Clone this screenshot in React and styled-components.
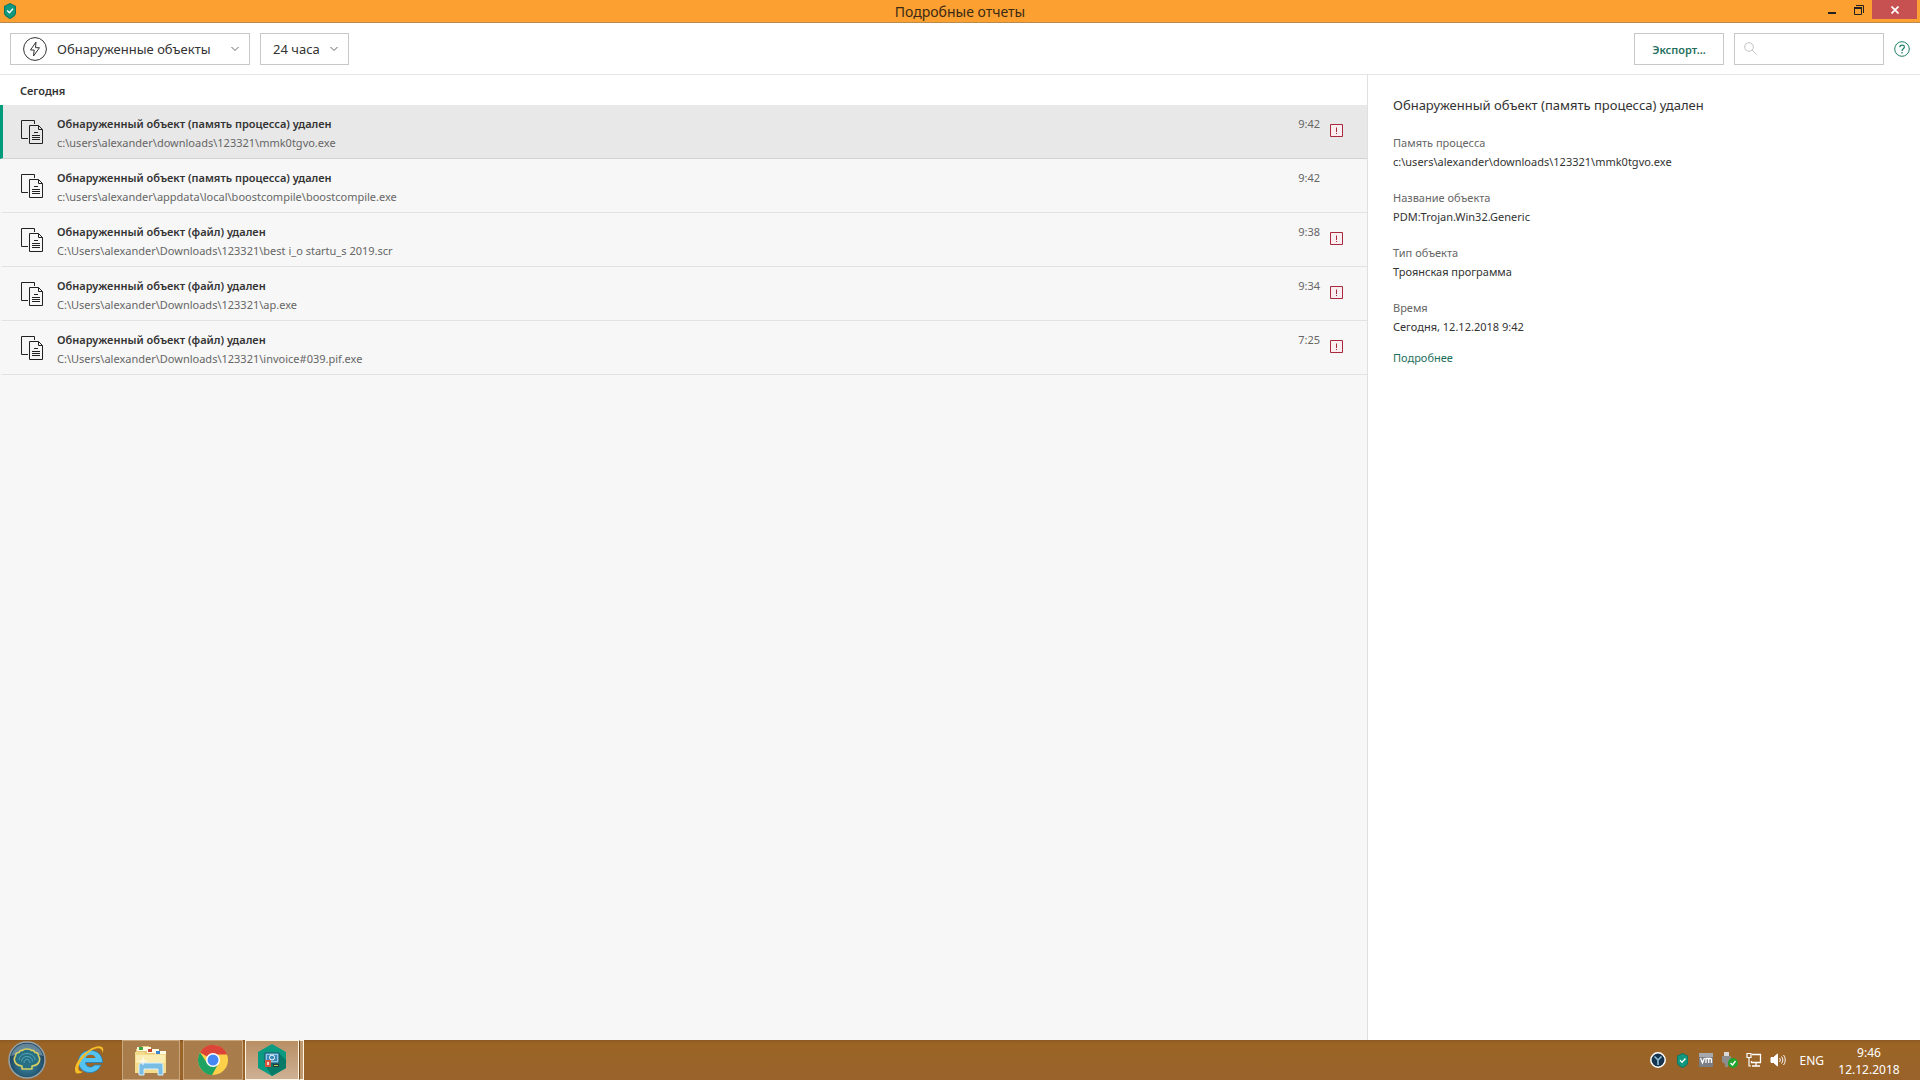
import React, { useState } from 'react'
import styled, { createGlobalStyle } from 'styled-components'

const GlobalStyle = createGlobalStyle`
  * {
    box-sizing: border-box;
  }
  body {
    margin: 0;
    background: #f7f7f7;
    color: #333;
    font-family: "Noto Sans", "Open Sans", sans-serif;
    font-size: 11px;
    line-height: 19px;
  }
  button, input, select {
    font: inherit;
    color: inherit;
    margin: 0;
  }
`

const Screen = styled.div`
  display: flex;
  flex-direction: column;
  min-height: 100vh;
`

/* title bar */
const TitleBar = styled.header`
  display: grid;
  grid-template-columns: 1fr auto 1fr;
  height: 23px;
  padding: 0 3px;
  background: #fca032;
  border-bottom: 1px solid #b98a4e;
`
const Logo = styled.div`
  padding: 3px 0 0 1px;
  svg { display: block; }
`
const WindowTitle = styled.h1`
  margin: 0;
  font-size: 14px;
  font-weight: 400;
  line-height: 23px;
  color: #3b2a14;
`
const WindowButtons = styled.div`
  display: flex;
  justify-content: flex-end;
`
const WindowButton = styled.button`
  display: flex;
  align-items: center;
  justify-content: center;
  width: ${p => p.$close ? "45px" : "27px"};
  height: 19px;
  padding: 0;
  border: none;
  background: ${p => p.$close ? "#c75050" : "transparent"};
`

/* toolbar */
const Toolbar = styled.div`
  display: flex;
  align-items: center;
  gap: 10px;
  height: 52px;
  padding: 0 10px;
  background: white;
  border-bottom: 1px solid #e6e6e6;
`
const Picker = styled.label`
  display: flex;
  align-items: center;
  width: ${p => p.$width};
  height: 32px;
  padding: 0 9px 0 12px;
  border: 1px solid #c8c8c8;
  background: white;
`
const PickerSelect = styled.select`
  flex: 1;
  min-width: 0;
  height: 30px;
  padding: 1px 0 0;
  border: none;
  outline: none;
  appearance: none;
  background: transparent;
  font-size: 13px;
  margin-left: ${p => p.$indent ? "10px" : "0"};
`
const Spacer = styled.div`
  flex: 1;
`
const ExportButton = styled.button`
  width: 90px;
  height: 32px;
  padding: 1px 0 0;
  border: 1px solid #c8c8c8;
  background: white;
  color: #1f6f5c;
  font-weight: 600;
`
const SearchBox = styled.label`
  display: flex;
  align-items: center;
  gap: 6px;
  width: 150px;
  height: 32px;
  padding: 0 9px;
  border: 1px solid #c8c8c8;
  background: white;
`
const SearchInput = styled.input`
  flex: 1;
  min-width: 0;
  padding: 0;
  border: none;
  outline: none;
  background: transparent;
`
const HelpButton = styled.button`
  display: flex;
  padding: 0;
  border: none;
  background: none;
`

/* report */
const Main = styled.main`
  flex: 1;
  display: grid;
  grid-template-columns: minmax(0, 1fr) 553px;
`
const ListPane = styled.section`
  background: #f7f7f7;
`
const DayHeader = styled.h2`
  margin: 0;
  padding: 6px 20px 5px;
  font-size: 11px;
  font-weight: 600;
  line-height: 19px;
  background: white;
`
const Events = styled.ul`
  margin: 0;
  padding: 0;
  list-style: none;
`
const EventRow = styled.button`
  display: flex;
  align-items: center;
  width: 100%;
  height: 54px;
  padding: 0 24px 0 18px;
  border: none;
  border-left: 3px solid ${p => p.$active ? "#009b7b" : "transparent"};
  border-bottom: 1px solid ${p => p.$active ? "#d2d2d2" : "#e2e2e2"};
  background: ${p => p.$active ? "#e8e8e8" : "#f7f7f7"};
  background-clip: padding-box;
  text-align: left;
`
const EventText = styled.span`
  flex: 1;
  display: flex;
  flex-direction: column;
  margin-left: 14px;
  padding-top: 3px;
`
const EventTitle = styled.strong`
  font-weight: 600;
`
const EventPath = styled.span`
  color: #666;
`
const EventTime = styled.time`
  align-self: flex-start;
  padding-top: 9px;
  color: #666;
`
const AlertSlot = styled.span`
  display: flex;
  width: 13px;
  margin-left: 10px;
  padding-bottom: 2px;
`
const Details = styled.aside`
  padding: 20px 25px;
  border-left: 1px solid #e0e0e0;
  background: white;
`
const DetailsTitle = styled.h2`
  margin: 0 0 18px;
  font-size: 13px;
  font-weight: 400;
  line-height: 20px;
`
const Fields = styled.dl`
  display: flex;
  flex-direction: column;
  gap: 17px;
  margin: 0 0 12px;
`
const FieldName = styled.dt`
  color: #666;
`
const FieldValue = styled.dd`
  margin: 0;
`
const MoreLink = styled.a`
  color: #1f6f5c;
  text-decoration: none;
`

/* taskbar */
const Taskbar = styled.footer`
  display: flex;
  align-items: stretch;
  height: 40px;
  background: linear-gradient(#8c5a23, #9c6526 4px, #99622a);
  color: white;
`
const TaskButton = styled.button`
  display: flex;
  align-items: center;
  justify-content: center;
  width: ${p => p.$width};
  padding: 0;
  margin-left: ${p => p.$gap || "0"};
  border: ${p => p.$open ? "1px solid #c9a67c" : "none"};
  background: ${p => p.$open ? "#a97c4b" : "transparent"};
  ${p => p.$focused && "border-color: #fff3e2; background: linear-gradient(#b98f64, #cdb093);"}
`
const StackEdge = styled.span`
  width: 5px;
  border: 1px solid #fff3e2;
  border-left: 1px solid #6f451a;
  background: #c09a70;
`
const Tray = styled.div`
  display: flex;
  align-items: center;
  gap: 8px;
  margin-left: auto;
`
const TrayButton = styled.button`
  display: flex;
  justify-content: center;
  width: 16px;
  padding: 0;
  border: none;
  background: none;
`
const Language = styled.span`
  margin-left: 5px;
  font-size: 12px;
`
const Clock = styled.time`
  width: 74px;
  margin-right: 14px;
  padding-top: 1px;
  font-size: 12px;
  line-height: 17px;
  text-align: center;
`

const Shield = ({ size = 16 }) => (
  <svg width={size * 0.75} height={size} viewBox="0 0 12 16">
    <path d="M6 0 12 3v7c0 2.500-3 4.500-6 6-3-1.500-6-3.500-6-6V3z" fill="#0c7563" />
    <path d="M6 1 11 3.500V10c0 2-2.500 3.600-5 4.900C3.500 13.600 1 12 1 10V3.500z" fill="#12987f" />
    <path d="m3.200 7.600 2.200 2.200 3.600-4" fill="none" stroke="white" strokeWidth="1.400" />
  </svg>
)

const Chevron = () => (
  <svg width="10" height="6" viewBox="0 0 10 6" aria-hidden="true">
    <path d="m1.500 1 3.500 3.500L8.500 1" fill="none" stroke="#666" />
  </svg>
)

const Bolt = () => (
  <svg width="24" height="24" viewBox="0 0 24 24" fill="none" stroke="#333" aria-hidden="true">
    <circle cx="12" cy="12" r="11.400" />
    <path d="M13 5 7.500 13h3.700L10.500 19l6-8.300h-4z" strokeLinejoin="round" />
  </svg>
)

const Documents = () => (
  <svg width="22" height="24" viewBox="0 0 22 24" fill="none" stroke="#222" aria-hidden="true">
    <path d="M13.500 4V.500H.500v18H7M8.500 5.500h9l4 4v14h-13z" />
    <path d="M17.500 5.500v4h4M13 12.500h4M11 15.500h8M11 17.500h8M11 19.500h8" />
  </svg>
)

const Alert = () => (
  <svg width="13" height="13" viewBox="0 0 13 13" role="img" aria-label="Важно">
    <path d="M.500.500h12v12H.500z" fill="#fbeef0" stroke="#a8293c" />
    <path d="M6.500 3.500V8M6.500 9v1" stroke="#a8293c" />
  </svg>
)

const Orb = () => (
  <svg width="38" height="38" viewBox="0 0 38 38">
    <defs>
      <radialGradient id="orb" cx="50%" cy="60%" r="55%">
        <stop offset="0" stopColor="#3f8fa5" />
        <stop offset=".6" stopColor="#28607a" />
        <stop offset="1" stopColor="#1f3f5a" />
      </radialGradient>
    </defs>
    <circle cx="19" cy="19" r="18" fill="url(#orb)" stroke="#93a3aa" strokeWidth="1.500" />
    <path d="M3 15a16.500 16.500 0 0 1 32 0c-8-3-24-3-32 0z" fill="#9db9c6" opacity=".55" />
    <path d="M14 28h10v-3c4-.5 7-2.500 7.500-5.500.5-2 0-3.500-1-4.500 0-2-1.500-3.500-3.500-3.500-.5-1.500-2-2.500-3.500-2C22.500 8 21 8 19 8s-3.500 0-4.500 1.500c-1.500-.5-3 .5-3.500 2C9 11.500 7.500 13 7.500 15c-1 1-1.500 2.500-1 4.500.5 3 3.500 5 7.500 5.500z" fill="#276f83" stroke="#d9cf63" strokeWidth="1.600" strokeLinejoin="round" />
    <path d="M11 19c0-4 4-6.500 8-6.500s8 2.500 8 6.500M13.500 20.500c0-3 2.500-5 5.500-5s5.500 2 5.500 5M16 22c0-2 1-3.500 3-3.500s3 1.500 3 3.500" fill="none" stroke="#5fb3c6" opacity=".8" />
  </svg>
)

const Explorer = () => (
  <svg width="34" height="32" viewBox="0 0 34 32">
    <path d="M2 5h5l1-3h7l1 3h4l1 2h9l2 2v20H2z" fill="#e7c873" />
    <path d="M3 3h14v4H3zM13 5h12v4H13zM21 7h11v4H21z" fill="#fffbe5" />
    <path d="M5 3h4v3H5z" fill="#3da53f" />
    <path d="M14 5h4v3h-4z" fill="#c6452f" />
    <path d="M22 7h4v3h-4z" fill="#3c86cf" />
    <path d="M1 8h9l2 2h20v19H1z" fill="#f4dc8c" />
    <path d="M2 11h29v8H2z" fill="#fbecb2" />
    <path d="M5 31V22c0-2 1-3 3-3h18c2 0 3 1 3 3v9h-5v-6H10v6z" fill="#79bde5" stroke="#d9f1fd" />
    <path d="M9 13v8M5 17h8" stroke="white" />
  </svg>
)

const InternetExplorer = () => (
  <svg width="32" height="32" viewBox="0 0 32 32" fill="none">
    <path d="M29.500 18.500H12.500c.5 5 6 6 9 2.500H28C23 33 5.500 30 5.500 17.500 5.500 3 29.500 2 29.500 18.500z" fill="#55c3f2" stroke="#1b83c4" strokeWidth=".8" />
    <path d="M12.500 14h10c-.5-4.500-9-4.500-10 0z" fill="#9c6526" />
    <path d="M29.500 9C33 1 24 .500 16 6 7 12 0 22 2.500 28c1 2.500 5 1.500 8-.500C2 29 5 19 13 11 20 4 29.500 1 29.500 9z" fill="#f6bd27" />
  </svg>
)

const Chrome = () => (
  <svg width="32" height="32" viewBox="0 0 32 32">
    <circle cx="16" cy="16" r="15" fill="#fdd04a" />
    <path d="M3 8.500a15 15 0 0 1 27.100 2L16 10.500 16 16z" fill="#db4437" />
    <path d="M3 8.500A15 15 0 0 0 15 31l6.500-11.500L10 19z" fill="#1ea362" />
    <circle cx="16" cy="16" r="7" fill="white" />
    <circle cx="16" cy="16" r="5.500" fill="#4587f3" />
  </svg>
)

const KasperskyHex = () => (
  <svg width="30" height="32" viewBox="0 0 30 32">
    <path d="m15 0 14 8v16l-14 8-14-8V8z" fill="#0b9b80" />
    <path d="m22 9 7 7v8l-14 8-6-9z" fill="#087b68" />
    <path d="M8 9h14v10H8z" fill="#8acbe8" stroke="#1d4d6c" />
    <path d="M10 11h10v6H10z" fill="#3a86b6" />
    <circle cx="15" cy="13.500" r="2.500" fill="none" stroke="white" />
    <path d="M8 16h6v7H8z" fill="#d9543f" />
    <path d="M10 18h2v3h-2z" fill="#f4d4c9" />
    <path d="M16 20h6v3h-6z" fill="#283a3e" />
    <path d="M17 21h4v1h-4z" fill="#b5d65a" />
  </svg>
)

const TrayWheel = () => (
  <svg width="16" height="16" viewBox="0 0 16 16">
    <circle cx="8" cy="8" r="7.200" fill="#17334d" stroke="white" strokeWidth="1.500" />
    <path d="M8 13V8L4.500 4.500M8 8l3.500-3.500" stroke="#8fc1da" strokeWidth="1.600" fill="none" />
  </svg>
)

const TrayVm = () => (
  <svg width="14" height="14" viewBox="0 0 14 14">
    <path d="M0 0h14v14H0z" fill="#7b7f85" />
    <path d="M0 0h14v4H0z" fill="#a5a9ad" />
    <path d="m1.500 5 2 5 2-5M7 10V5.500h4.500c1 0 1 .500 1 1V10M9.700 6v4" fill="none" stroke="white" strokeWidth="1.300" />
  </svg>
)

const TrayUsb = () => (
  <svg width="16" height="16" viewBox="0 0 16 16">
    <path d="M2 0h5v4H2z" fill="#d8d8d8" />
    <path d="M0 4h9v6l-3 2v3H3v-3l-3-2z" fill="#8d8d8d" />
    <circle cx="11" cy="11" r="5" fill="#22a52e" />
    <path d="m8.500 11 2 2 3-4" stroke="white" strokeWidth="1.400" fill="none" />
  </svg>
)

const TrayNetwork = () => (
  <svg width="16" height="16" viewBox="0 0 16 16" fill="none" stroke="white">
    <path d="M6 2.500h8.500v8H5.500V9M10 10.500v3M6 14h8" strokeWidth="1.300" />
    <path d="M1 1.500h4v4H1zM3 5.500V14h2" strokeWidth="1.200" />
  </svg>
)

const TraySound = () => (
  <svg width="16" height="16" viewBox="0 0 16 16" fill="none" stroke="white">
    <path d="M1 5.500h2.500L7.500 2v12l-4-3.500H1z" fill="white" />
    <path d="M9.500 6c1 1.200 1 2.800 0 4M11.500 4.500c1.800 2 1.800 5 0 7M13.500 3c2.300 3 2.300 7 0 10" />
  </svg>
)

const events = [
  { title: "Обнаруженный объект (память процесса) удален", path: "c:\\users\\alexander\\downloads\\123321\\mmk0tgvo.exe", time: "9:42", alert: true },
  { title: "Обнаруженный объект (память процесса) удален", path: "c:\\users\\alexander\\appdata\\local\\boostcompile\\boostcompile.exe", time: "9:42", alert: false },
  { title: "Обнаруженный объект (файл) удален", path: "C:\\Users\\alexander\\Downloads\\123321\\best i_o startu_s 2019.scr", time: "9:38", alert: true },
  { title: "Обнаруженный объект (файл) удален", path: "C:\\Users\\alexander\\Downloads\\123321\\ap.exe", time: "9:34", alert: true },
  { title: "Обнаруженный объект (файл) удален", path: "C:\\Users\\alexander\\Downloads\\123321\\invoice#039.pif.exe", time: "7:25", alert: true },
]

const fields = [
  { name: "Память процесса", value: "c:\\users\\alexander\\downloads\\123321\\mmk0tgvo.exe" },
  { name: "Название объекта", value: "PDM:Trojan.Win32.Generic" },
  { name: "Тип объекта", value: "Троянская программа" },
  { name: "Время", value: "Сегодня, 12.12.2018 9:42" },
]

const App = () => {
  const [active, setActive] = useState(0)

  return (
    <Screen>
      <GlobalStyle />
      <TitleBar>
        <Logo><Shield /></Logo>
        <WindowTitle>Подробные отчеты</WindowTitle>
        <WindowButtons>
          <WindowButton aria-label="Свернуть">
            <svg width="8" height="10" viewBox="0 0 8 10"><path d="M0 7h8v2H0z" fill="#222" /></svg>
          </WindowButton>
          <WindowButton aria-label="Восстановить">
            <svg width="10" height="10" viewBox="0 0 10 10" fill="none" stroke="#222">
              <path d="M2 .500h7.500V8M.500 3h7v6.500h-7z" /><path d="M0 3h8" strokeWidth="2" />
            </svg>
          </WindowButton>
          <WindowButton $close aria-label="Закрыть">
            <svg width="8" height="8" viewBox="0 0 8 8"><path d="m.500.500 7 7m0-7-7 7" stroke="white" strokeWidth="1.700" /></svg>
          </WindowButton>
        </WindowButtons>
      </TitleBar>

      <Toolbar>
        <Picker $width="240px">
          <Bolt />
          <PickerSelect $indent aria-label="Отчет">
            <option>Обнаруженные объекты</option>
          </PickerSelect>
          <Chevron />
        </Picker>
        <Picker $width="89px">
          <PickerSelect aria-label="Период">
            <option>24 часа</option>
          </PickerSelect>
          <Chevron />
        </Picker>
        <Spacer />
        <ExportButton>Экспорт...</ExportButton>
        <SearchBox>
          <svg width="13" height="13" viewBox="0 0 13 13" fill="none" stroke="#c4c4c4" aria-hidden="true">
            <circle cx="5" cy="5" r="4.300" /><path d="m8 8 4.500 4.500" />
          </svg>
          <SearchInput type="search" aria-label="Поиск" />
        </SearchBox>
        <HelpButton aria-label="Справка">
          <svg width="16" height="16" viewBox="0 0 16 16" fill="none" stroke="#1f8069">
            <circle cx="8" cy="8" r="7.300" />
            <path d="M5.800 6.300c0-3 4.600-2.800 4.600-.3C10.400 7.800 8 7.800 8 10M8 11v1.500" strokeWidth="1.200" />
          </svg>
        </HelpButton>
      </Toolbar>

      <Main>
        <ListPane>
          <DayHeader>Сегодня</DayHeader>
          <Events>
            {events.map((item, i) => (
              <li key={i}>
                <EventRow $active={i === active} onClick={() => setActive(i)}>
                  <Documents />
                  <EventText>
                    <EventTitle>{item.title}</EventTitle>
                    <EventPath>{item.path}</EventPath>
                  </EventText>
                  <EventTime>{item.time}</EventTime>
                  <AlertSlot>{item.alert && <Alert />}</AlertSlot>
                </EventRow>
              </li>
            ))}
          </Events>
        </ListPane>
        <Details>
          <DetailsTitle>Обнаруженный объект (память процесса) удален</DetailsTitle>
          <Fields>
            {fields.map(field => (
              <div key={field.name}>
                <FieldName>{field.name}</FieldName>
                <FieldValue>{field.value}</FieldValue>
              </div>
            ))}
          </Fields>
          <MoreLink href="#more">Подробнее</MoreLink>
        </Details>
      </Main>

      <Taskbar>
        <TaskButton $width="54px" aria-label="Пуск"><Orb /></TaskButton>
        <TaskButton $width="66px" $gap="2px" aria-label="Internet Explorer"><InternetExplorer /></TaskButton>
        <TaskButton $width="58px" $open aria-label="Проводник"><Explorer /></TaskButton>
        <TaskButton $width="60px" $gap="3px" $open aria-label="Google Chrome"><Chrome /></TaskButton>
        <TaskButton $width="54px" $gap="2px" $open $focused aria-label="Kaspersky"><KasperskyHex /></TaskButton>
        <StackEdge />
        <Tray>
          <TrayButton aria-label="Служба"><TrayWheel /></TrayButton>
          <TrayButton aria-label="Защита"><Shield size={15} /></TrayButton>
          <TrayButton aria-label="Виртуальная машина"><TrayVm /></TrayButton>
          <TrayButton aria-label="Извлечение устройства"><TrayUsb /></TrayButton>
          <TrayButton aria-label="Сеть"><TrayNetwork /></TrayButton>
          <TrayButton aria-label="Громкость"><TraySound /></TrayButton>
          <Language>ENG</Language>
          <Clock>9:46<br />12.12.2018</Clock>
        </Tray>
      </Taskbar>
    </Screen>
  )
}

export default App
